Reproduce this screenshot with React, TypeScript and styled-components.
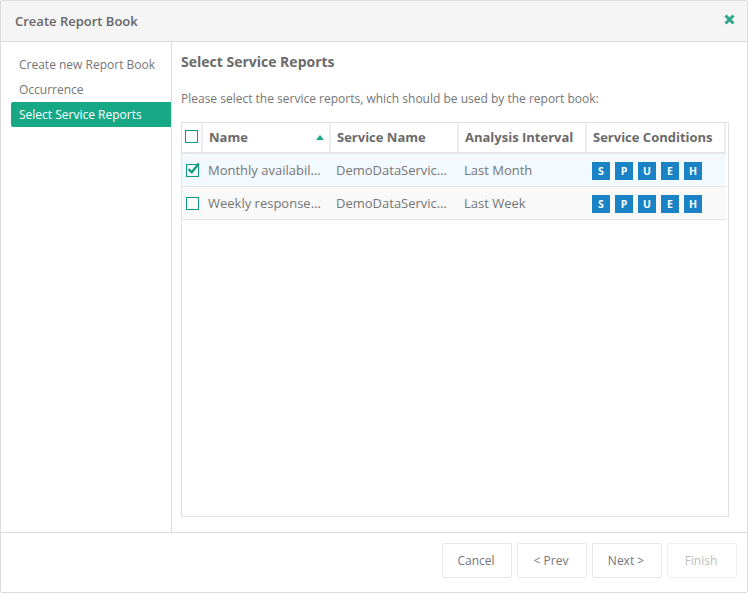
import React from "react";
import styled, { createGlobalStyle } from "styled-components";

const Global = createGlobalStyle`
  html, body { margin: 0; padding: 0; background: #fff; }
  body { font-family: "Open Sans", "Liberation Sans", sans-serif; color: #6b6b6b; }
`;

const Dialog = styled.div`
  width: 748px; height: 593px; box-sizing: border-box;
  border: 1px solid #dcdcdc; border-radius: 2px; display: flex; flex-direction: column; background: #fff; overflow: hidden;
`;
const Header = styled.header`
  height: 41px; flex: none; box-sizing: border-box; background: #f5f5f5; border-bottom: 1px solid #dcdcdc;
  display: flex; align-items: center; justify-content: space-between; padding: 0 12px 0 14px;
`;
const Title = styled.h1`
  margin: 0; font-size: 13px; font-weight: 600; color: #666; line-height: 40px;
`;
const CloseIcon = styled.svg`
  width: 11px; height: 11px; margin-top: -4px; display: block;
`;
const Body = styled.div`
  flex: 1; display: flex; min-height: 0;
`;
const Sidebar = styled.nav`
  width: 171px; flex: none; box-sizing: border-box; border-right: 1px solid #dcdcdc; padding: 10px 0 0 10px;
  display: flex; flex-direction: column;
`;
const Step = styled.div<{ $active?: boolean }>`
  height: 25px; line-height: 25px; padding-left: 8px; font-size: 12px; white-space: nowrap;
  color: ${(p) => (p.$active ? "#fff" : "#757575")};
  background: ${(p) => (p.$active ? "#17a886" : "transparent")};
  border-radius: ${(p) => (p.$active ? "2px 0 0 2px" : "0")};
`;
const Main = styled.main`
  flex: 1; min-width: 0; display: flex; flex-direction: column; padding: 10px 18px 15px 9px;
`;
const Heading = styled.h2`
  margin: 0; font-size: 14px; font-weight: 700; line-height: 20px; color: #6a6a6a;
`;
const Intro = styled.p`
  margin: 18px 0 0; font-size: 12px; line-height: 18px; color: #757575;
`;
const TableBox = styled.div`
  margin-top: 14px; flex: 1; border: 1px solid #e2e2e2; box-sizing: border-box; padding: 0 2px 0 0; min-height: 0;
`;
const Cols = "21px 128px 128px 128px 139px";
const HeadRow = styled.div`
  display: grid; grid-template-columns: ${Cols}; height: 31px; box-sizing: border-box; border-bottom: 2px solid #e6e6e6;
`;
const HeadCell = styled.div`
  display: flex; align-items: center; justify-content: space-between; box-sizing: border-box;
  padding: 0 5px 1px 6px; font-size: 13px; font-weight: 700; color: #6a6a6a; white-space: nowrap;
  border-right: 2px solid #ececec;
`;
const HeadCheckCell = styled.div`
  display: flex; align-items: center; box-sizing: border-box; padding: 0 0 2px 3px;
  border-right: 2px solid #ececec;
`;
const Row = styled.div<{ $selected?: boolean }>`
  display: grid; grid-template-columns: ${Cols}; height: 33px; box-sizing: border-box; border-bottom: 1px solid #e4e4e4;
  background: ${(p) => (p.$selected ? "#f2faff" : "#f9f9f9")};
`;
const Cell = styled.div`
  display: flex; align-items: center; padding: 0 5px; min-width: 0; font-size: 13px; color: #757575; white-space: nowrap;
`;
const CheckCell = styled.div`
  display: flex; align-items: center; padding: 1px 0 0 4px;
`;
const Box = styled.svg`
  width: 13px; height: 13px; display: block; overflow: visible;
`;
const SortIcon = styled.svg`
  width: 8px; height: 5px; display: block;
`;
const Badges = styled.div`
  display: flex; gap: 5px; margin-top: 2px;
`;
const Badge = styled.span`
  width: 18px; height: 18px; background: #1a83c6; color: #fff; font-size: 10.5px; font-weight: 700;
  display: flex; align-items: center; justify-content: center;
`;
const Footer = styled.footer`
  height: 60px; flex: none; box-sizing: border-box; border-top: 1px solid #dcdcdc;
  display: flex; justify-content: flex-end; gap: 5px; padding: 10px 10px 0 0;
`;
const Button = styled.button<{ $disabled?: boolean }>`
  width: 70px; height: 35px; box-sizing: border-box; background: #fff; border-radius: 2px; padding: 0 2px 0 0;
  border: 1px solid ${(p) => (p.$disabled ? "#f0f0f0" : "#e6e6e6")};
  color: ${(p) => (p.$disabled ? "#bdbdbd" : "#757575")};
  font-family: inherit; font-size: 12px;
`;

const Check = ({ checked }: { checked?: boolean }) => (
  <Box viewBox="0 0 13 13">
    <rect x="0.5" y="0.5" width="12" height="12" fill="none" stroke="#0f9a80" strokeWidth="1" />
    {checked && <path d="M2.5 5 L5.8 8.3 L12.8 -0.5" fill="none" stroke="#0f9a80" strokeWidth="2.2" />}
  </Box>
);

const rows = [
  { name: "Monthly availabil…", service: "DemoDataServic…", interval: "Last Month", selected: true },
  { name: "Weekly response…", service: "DemoDataServic…", interval: "Last Week", selected: false },
];

export default function App() {
  return (
    <Dialog>
      <Global />
      <Header>
        <Title>Create Report Book</Title>
        <CloseIcon viewBox="0 0 11 11">
          <path d="M1.5 1.5 L9.5 9.5 M9.5 1.5 L1.5 9.5" stroke="#2fa58c" strokeWidth="3" fill="none" />
        </CloseIcon>
      </Header>
      <Body>
        <Sidebar>
          <Step>Create new Report Book</Step>
          <Step>Occurrence</Step>
          <Step $active>Select Service Reports</Step>
        </Sidebar>
        <Main>
          <Heading>Select Service Reports</Heading>
          <Intro>Please select the service reports, which should be used by the report book:</Intro>
          <TableBox>
            <HeadRow>
              <HeadCheckCell><Check /></HeadCheckCell>
              <HeadCell>
                Name
                <SortIcon viewBox="0 0 8 5"><path d="M4 0 L8 5 L0 5 Z" fill="#17a886" /></SortIcon>
              </HeadCell>
              <HeadCell>Service Name</HeadCell>
              <HeadCell>Analysis Interval</HeadCell>
              <HeadCell>Service Conditions</HeadCell>
            </HeadRow>
            {rows.map((r) => (
              <Row key={r.name} $selected={r.selected}>
                <CheckCell><Check checked={r.selected} /></CheckCell>
                <Cell>{r.name}</Cell>
                <Cell>{r.service}</Cell>
                <Cell>{r.interval}</Cell>
                <Cell>
                  <Badges>
                    {["S", "P", "U", "E", "H"].map((b) => <Badge key={b}>{b}</Badge>)}
                  </Badges>
                </Cell>
              </Row>
            ))}
          </TableBox>
        </Main>
      </Body>
      <Footer>
        <Button>Cancel</Button>
        <Button>&lt; Prev</Button>
        <Button>Next &gt;</Button>
        <Button $disabled>Finish</Button>
      </Footer>
    </Dialog>
  );
}
